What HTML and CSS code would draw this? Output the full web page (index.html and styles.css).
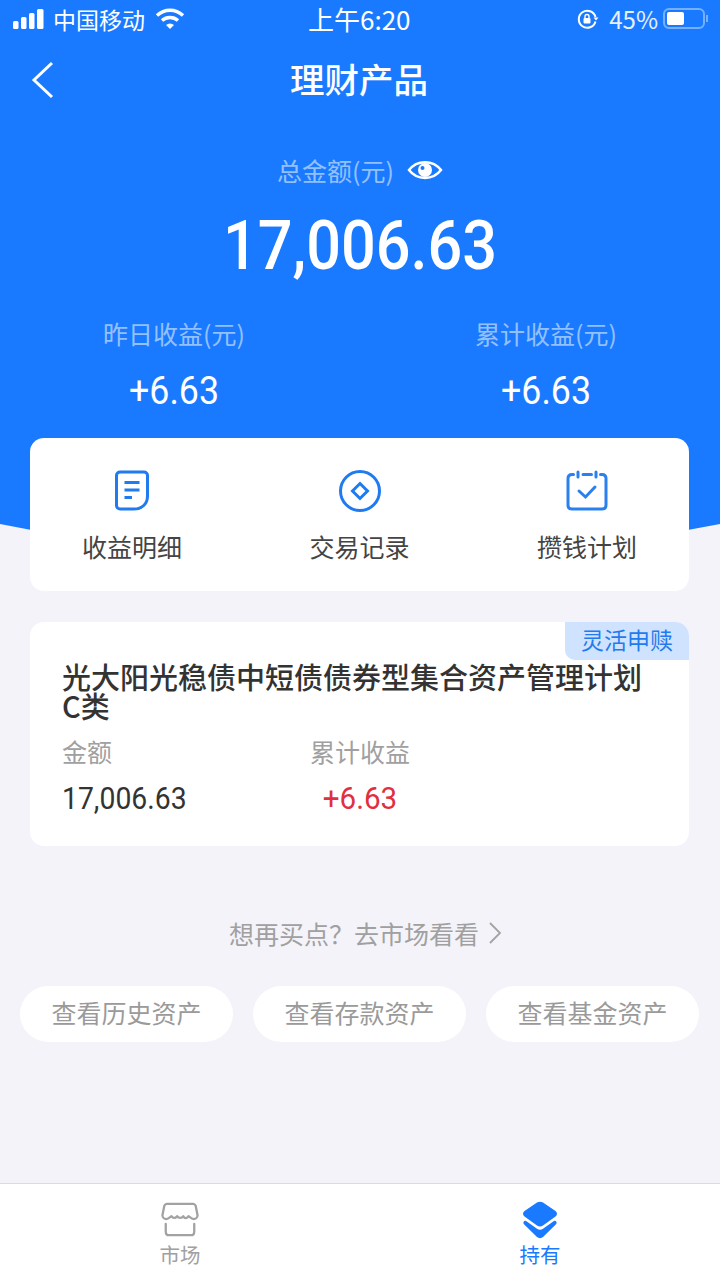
FILE: index.html
```html
<!DOCTYPE html>
<html lang="zh-CN">

<head>
    <meta charset="UTF-8">
    <meta name="viewport" content="width=device-width, initial-scale=1.0">
    <title>理财产品</title>
    <link rel="stylesheet" href="styles.css">
</head>

<body>

    <div class="page">

        <!-- 顶部蓝色区域 -->
        <div class="hero">
            <div class="status-bar">
                <div class="status-left">
                    <svg class="signal" width="32" height="20" viewBox="0 0 32 20" fill="#fff">
                        <rect x="0" y="12" width="5.500" height="8" rx="1.500" />
                        <rect x="8" y="8" width="5.500" height="12" rx="1.500" />
                        <rect x="16" y="4" width="5.500" height="16" rx="1.500" />
                        <rect x="24" y="0" width="6.500" height="20" rx="1.500" />
                    </svg>
                    <span>中国移动</span>
                    <svg class="wifi" width="30" height="22" viewBox="0 0 30 22" fill="none" stroke="#fff" stroke-width="3.400">
                        <path d="M2 7.500C9.500 0.500 20.500 0.500 28 7.500" />
                        <path d="M7 12.500C11.500 8.500 18.500 8.500 23 12.500" />
                        <path d="M11 17C13.500 15 16.500 15 19 17L15 21Z" fill="#fff" stroke="none" />
                    </svg>
                </div>
                <div class="status-time">上午6:20</div>
                <div class="status-right">
                    <svg width="22" height="20" viewBox="0 0 22 20" fill="none" stroke="#fff" stroke-width="2">
                        <path d="M18.500 8A8.500 8.500 0 1 0 18.500 12.500" />
                        <path d="M16.500 8.500L21.500 8.500L19 11.500Z" fill="#fff" stroke="none" />
                        <rect x="6.500" y="9" width="7" height="5.500" rx="1" fill="#fff" stroke="none" />
                        <path d="M8 9V7.500A2 2 0 0 1 12 7.500V9" stroke-width="1.400" />
                    </svg>
                    <span class="status-pct">45%</span>
                    <div class="battery">
                        <div class="battery-level"></div>
                    </div>
                    <div class="battery-nub"></div>
                </div>
            </div>

            <div class="nav-bar">
                <svg class="back" width="24" height="38" viewBox="0 0 24 38" fill="none" stroke="#fff" stroke-width="3">
                    <path d="M21 2L3 19L21 36" />
                </svg>
                <h1>理财产品</h1>
            </div>

            <div class="total-label">
                <span>总金额(元)</span>
                <svg width="36" height="24" viewBox="0 0 36 24">
                    <path d="M2 12C10 1.500 26 1.500 34 12C26 22.500 10 22.500 2 12Z" fill="none" stroke="#fff" stroke-width="2.500" />
                    <circle cx="18" cy="12" r="7" fill="#fff" />
                    <circle cx="15.500" cy="10" r="2" fill="#1a7aff" />
                </svg>
            </div>
            <div class="total-value">17,006.63</div>

            <div class="income-row">
                <div class="income-col">
                    <div class="income-label">昨日收益(元)</div>
                    <div class="income-value">+6.63</div>
                </div>
                <div class="income-col">
                    <div class="income-label">累计收益(元)</div>
                    <div class="income-value">+6.63</div>
                </div>
            </div>
        </div>

        <!-- 功能入口 -->
        <div class="card actions">
            <div class="action">
                <svg width="44" height="44" viewBox="-1 0 44 44" fill="none" stroke="#1f7bef" stroke-width="3">
                    <path d="M9 3H33C35 3 36.500 4.500 36.500 6.500V27C36.500 35 31 40 23 40H9C7 40 5.500 38.500 5.500 36.500V6.500C5.500 4.500 7 3 9 3Z" />
                    <path d="M13.500 13.500H28.500M13.500 21H28.500M13.500 28.500H21" />
                </svg>
                <span>收益明细</span>
            </div>
            <div class="action">
                <svg width="44" height="44" viewBox="-1 0 44 44" fill="none" stroke="#1f7bef" stroke-width="3">
                    <circle cx="22" cy="22" r="19.500" />
                    <path d="M22 14.500L29.500 22L22 29.500L14.500 22Z" />
                </svg>
                <span>交易记录</span>
            </div>
            <div class="action">
                <svg width="44" height="44" viewBox="0 0 44 44" fill="none" stroke="#2b80f0" stroke-width="3" stroke-linecap="round">
                    <path d="M8.500 5.500H7C4.500 5.500 3 7 3 9.500V36C3 38.500 4.500 40 7 40H37C39.500 40 41 38.500 41 36V9.500C41 7 39.500 5.500 37 5.500H35.500" />
                    <path d="M13 3V8M31 3V8M18 5.500H26.500" />
                    <path d="M14 22L20.500 28L30 18" />
                </svg>
                <span>攒钱计划</span>
            </div>
        </div>

        <!-- 持有产品 -->
        <div class="card product">
            <div class="tag">灵活申赎</div>
            <div class="product-name">光大阳光稳债中短债债券型集合资产管理计划C类</div>
            <div class="product-stats">
                <div class="stat">
                    <div class="stat-label">金额</div>
                    <div class="stat-value">17,006.63</div>
                </div>
                <div class="stat stat-center">
                    <div class="stat-label">累计收益</div>
                    <div class="stat-value red">+6.63</div>
                </div>
            </div>
        </div>

        <div class="more-link">
            <span>想再买点？去市场看看</span>
            <svg width="14" height="24" viewBox="0 0 14 24" fill="none" stroke="#a3a3a3" stroke-width="1.800">
                <path d="M2 2L12 12L2 22" />
            </svg>
        </div>

        <div class="pills">
            <div class="pill">查看历史资产</div>
            <div class="pill">查看存款资产</div>
            <div class="pill">查看基金资产</div>
        </div>

        <!-- 底部导航 -->
        <div class="tab-bar">
            <div class="tab">
                <svg width="38" height="38" viewBox="0 0 40 38" fill="none" stroke="#a2a2a2" stroke-width="2.400" stroke-linejoin="round">
                    <path d="M6 2H34C35.500 2 36 3 36.500 4L38.500 14C38.500 17 36 18 34.500 18C32.500 18 31 16.500 29 15C27.500 17.500 25 18 23.500 15C22 17.500 18.500 17.500 17 15C15 17.500 12.500 17.500 11 15C9 16.500 7.500 18 5.500 18C4 18 1.500 17 1.500 14L3.500 4C4 3 4.500 2 6 2Z" />
                    <path d="M5 23V31C5 33.500 6 35 8.500 35H31.500C34 35 35 33.500 35 31V23" stroke-linecap="round" />
                </svg>
                <span>市场</span>
            </div>
            <div class="tab tab-active">
                <svg width="36" height="38" viewBox="0 0 36 38" fill="#1a7aff">
                    <path d="M15 1.500C16.800 0.400 19.200 0.400 21 1.500L33.500 10C35.500 11.300 35.500 14.200 33.500 15.500L21 24.500C19.200 25.700 16.800 25.700 15 24.500L2.500 15.500C0.500 14.200 0.500 11.300 2.500 10Z" />
                    <path d="M1.800 20.500C2.600 19.500 3.800 19.700 4.800 20.400L15 27.800C16.800 29 19.200 29 21 27.800L31.200 20.400C32.200 19.700 33.400 19.500 34.200 20.500C35 21.700 34.600 23 33.500 23.800L21 36C19.200 37.500 16.800 37.500 15 36L2.500 23.800C1.400 23 1 21.700 1.800 20.500Z" />
                </svg>
                <span>持有</span>
            </div>
        </div>

    </div>

</body>

</html>
```

FILE: styles.css
```css
* {
    box-sizing: border-box;
}

body {
    margin: 0;
    font-family: "Noto Sans CJK SC", "Noto Sans", sans-serif;
    background-color: #f3f3f9;
    color: #333;
}

.page {
    display: flex;
    flex-direction: column;
    width: 720px;
    height: 1280px;
    overflow: hidden;
}

.hero {
    height: 560px;
    margin-bottom: -122px;
    background-color: #1a7aff;
    color: #fff;
    clip-path: path("M0 0H720V524Q360 596 0 524Z");
}

.status-bar {
    display: flex;
    justify-content: space-between;
    align-items: center;
    height: 40px;
    padding: 0 12px 3px 13px;
    font-size: 23px;
    position: relative;
}

.status-left,
.status-right {
    display: flex;
    align-items: center;
}

.status-left span {
    margin: 0 10px 0 8px;
}

.status-time {
    position: absolute;
    left: 308px;
    font-size: 26px;
}

.status-right svg {
    margin-right: 10px;
}

.status-pct {
    margin-right: 5px;
    font-size: 24px;
    color: #e6f0ff;
}

.battery {
    width: 42px;
    height: 21px;
    padding: 2px;
    border: 2px solid rgba(255, 255, 255, 0.4);
    border-radius: 6px;
}

.battery-level {
    width: 17px;
    height: 13px;
    background: #fff;
    border-radius: 2px;
}

.battery-nub {
    width: 2px;
    height: 7px;
    margin-left: 1px;
    background: rgba(255, 255, 255, 0.4);
}

.nav-bar {
    display: flex;
    justify-content: center;
    align-items: center;
    height: 82px;
    padding: 0 2px 4px 0;
    position: relative;
}

.back {
    position: absolute;
    left: 31px;
    top: 21px;
}

h1 {
    margin: 0;
    font-size: 34.500px;
    font-weight: 500;
    line-height: 1.200;
}

.total-label {
    display: flex;
    justify-content: center;
    align-items: center;
    height: 36px;
    margin-top: 30px;
    font-size: 25px;
    color: rgba(255, 255, 255, 0.55);
}

.total-label svg {
    margin-left: 13px;
}

.total-value {
    margin-top: 20px;
    font-family: Roboto, sans-serif;
    font-size: 68px;
    font-weight: 500;
    line-height: 76px;
    text-align: center;
    transform: scaleX(0.900);
}

.income-row {
    display: flex;
    justify-content: center;
    gap: 172px;
    margin-top: 31px;
}

.income-col {
    width: 200px;
    text-align: center;
}

.income-label {
    font-size: 25px;
    line-height: 36px;
    color: rgba(255, 255, 255, 0.55);
}

.income-value {
    margin-top: 21px;
    font-family: Roboto, sans-serif;
    font-size: 38px;
    line-height: 38px;
    transform: scaleX(0.940);
}

.card {
    position: relative;
    width: 659px;
    margin-left: 30px;
    background: #fff;
    border-radius: 14px;
}

.actions {
    display: flex;
    justify-content: space-between;
    height: 153px;
    padding: 31px 52px 0;
}

.action {
    display: flex;
    flex-direction: column;
    align-items: center;
    gap: 15px;
    font-size: 25px;
    line-height: 36px;
    color: #444;
}

.product {
    height: 224px;
    margin-top: 31px;
    padding: 40px 32px 0;
}

.tag {
    position: absolute;
    top: 0;
    right: 0;
    width: 124px;
    height: 38px;
    background: #cfe3fe;
    border-radius: 0 14px 0 10px;
    color: #1f7bef;
    font-size: 23px;
    line-height: 35px;
    text-align: center;
}

.product-name {
    font-size: 29px;
    font-weight: 500;
    line-height: 29px;
}

.product-stats {
    display: flex;
    margin-top: 14px;
}

.stat {
    width: 248px;
}

.stat-center {
    width: 100px;
    text-align: center;
}

.stat-label {
    font-size: 25px;
    line-height: 34px;
    color: #a0a0a0;
}

.stat-value {
    margin-top: 12px;
    font-family: Roboto, sans-serif;
    font-size: 32px;
    line-height: 36px;
    color: #333;
    transform: scaleX(0.886);
    transform-origin: left;
}

.stat-center .stat-value {
    transform: scaleX(0.925);
    transform-origin: center;
}

.stat-value.red {
    color: #e0303f;
}

.more-link {
    display: flex;
    justify-content: center;
    align-items: center;
    gap: 9px;
    height: 36px;
    margin-top: 69px;
    padding-left: 11px;
    font-size: 25px;
    color: #a0a0a0;
}

.pills {
    display: flex;
    gap: 20px;
    margin-top: 35px;
    padding-left: 20px;
}

.pill {
    width: 213px;
    height: 56px;
    background: #fff;
    border-radius: 28px;
    color: #9a9a9a;
    font-size: 25px;
    line-height: 52px;
    text-align: center;
}

.tab-bar {
    display: flex;
    margin-top: auto;
    height: 97px;
    padding-top: 17px;
    background: #fff;
    border-top: 1px solid #dcdcdc;
}

.tab {
    display: flex;
    flex-direction: column;
    align-items: center;
    width: 360px;
    font-size: 20.500px;
    line-height: 30px;
    color: #a0a0a0;
}

.tab-active {
    color: #1a7aff;
}
```
